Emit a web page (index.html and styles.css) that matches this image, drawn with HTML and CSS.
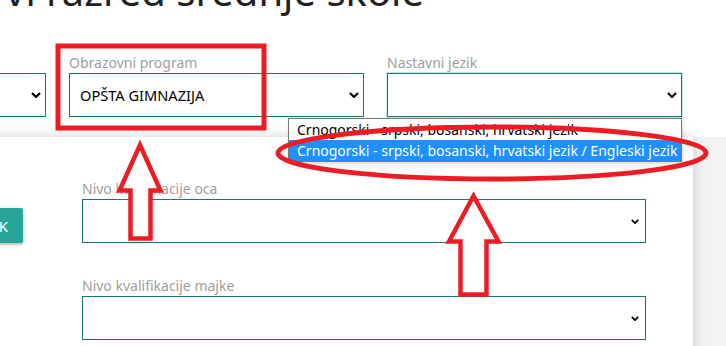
FILE: index.html
```html
<!DOCTYPE html>
<html lang="sr">
<head>
    <meta charset="UTF-8">
    <meta name="viewport" content="width=device-width, initial-scale=1.0">
    <title>Upis u prvi razred srednje škole</title>
    <link rel="stylesheet" href="styles.css">
</head>
<body>
    <div class="page">
        <h1 class="title"><span>Upis u prvi razred srednje škole</span></h1>

        <div class="top-form">
            <div class="field">
                <label>Razred</label>
                <div class="select">
                    <span></span>
                    <svg class="caret" viewBox="0 0 10 6"><polyline points="1,1 5,5 9,1"/></svg>
                </div>
            </div>
            <div class="field">
                <label>Obrazovni program</label>
                <div class="select">
                    <span>OPŠTA GIMNAZIJA</span>
                    <svg class="caret" viewBox="0 0 10 6"><polyline points="1,1 5,5 9,1"/></svg>
                </div>
            </div>
            <div class="field">
                <label>Nastavni jezik</label>
                <div class="select focused">
                    <span></span>
                    <svg class="caret" viewBox="0 0 10 6"><polyline points="1,1 5,5 9,1"/></svg>
                </div>
                <ul class="options">
                    <li>Crnogorski - srpski, bosanski, hrvatski jezik</li>
                    <li class="active">Crnogorski - srpski, bosanski, hrvatski jezik / Engleski jezik</li>
                </ul>
            </div>
        </div>

        <div class="lower">
            <div class="panel">
                <button class="btn">OK</button>
                <div class="fields">
                    <div class="field">
                        <label>Nivo kvalifikacije oca</label>
                        <div class="select">
                            <span></span>
                            <svg class="caret small" viewBox="0 0 10 6"><polyline points="1,1 5,5 9,1"/></svg>
                        </div>
                    </div>
                    <div class="field">
                        <label>Nivo kvalifikacije majke</label>
                        <div class="select">
                            <span></span>
                            <svg class="caret small" viewBox="0 0 10 6"><polyline points="1,1 5,5 9,1"/></svg>
                        </div>
                    </div>
                </div>
            </div>
        </div>

        <!-- red markup drawn over the screenshot -->
        <svg class="marks" viewBox="0 0 726 346">
            <rect x="58" y="46" width="206" height="82"/>
            <polygon points="140,145 160.5,190.5 150.5,190.5 150.5,238.5 130.5,238.5 130.5,190.5 119.5,190.5"/>
            <polygon points="473.5,196 498.5,241.5 486.5,241.5 486.5,294.5 460.5,294.5 460.5,241.5 449,241.5"/>
            <ellipse cx="492" cy="153" rx="214" ry="26"/>
        </svg>
    </div>
</body>
</html>
```

FILE: styles.css
```css
* {
    box-sizing: border-box;
}
html, body {
    margin: 0;
    background: #fff;
}
body {
    font-family: "Noto Sans", "Open Sans", sans-serif;
    color: #212121;
}
.page {
    position: relative;
    width: 726px;
    height: 346px;
    overflow: hidden;
}
.title {
    display: flex;
    justify-content: flex-end;
    width: 424px;
    margin: -33px 0 0;
    font-size: 40px;
    font-weight: 400;
    line-height: 48px;
    white-space: nowrap;
}
.top-form {
    display: grid;
    grid-template-columns: repeat(3, 295px);
    column-gap: 23px;
    margin: 38px 0 0 -249px;
}
.field {
    position: relative;
}
.field label {
    display: block;
    font-size: 14px;
    line-height: 20px;
    color: #9e9e9e;
}
.select {
    display: flex;
    align-items: center;
    justify-content: space-between;
    height: 44px;
    padding: 0 4px 0 10px;
    border: 1px solid #17796d;
    font-size: 14.6px;
    color: #000;
}
.select.focused {
    box-shadow: 0 0 0 1px rgba(38, 166, 154, 0.25);
}
.caret {
    width: 10px;
    height: 6px;
    fill: none;
    stroke: #000;
    stroke-width: 2.2;
}
.caret.small {
    width: 8px;
    height: 5px;
    margin-right: 2px;
}
.options {
    position: absolute;
    top: 65px;
    right: 0;
    width: 394px;
    margin: 0;
    padding: 0;
    list-style: none;
    background: #fff;
    border: 1px solid #787878;
    box-shadow: 1px 2px 4px rgba(0, 0, 0, 0.15);
    z-index: 3;
}
.options li {
    height: 21px;
    padding-left: 8px;
    font-size: 14px;
    line-height: 21px;
    color: #000;
    white-space: nowrap;
    overflow: hidden;
}
.options li.active {
    background: #1e90ff;
    color: #fff;
}
.lower {
    margin: 20px 0 0 -40px;
    padding-right: 33px;
    background: #f3f3f3;
    height: 300px;
}
.panel {
    display: flex;
    height: 100%;
    padding: 42px 0 0 7px;
    background: #fff;
    box-shadow: 0 0 12px rgba(0, 0, 0, 0.18);
}
.btn {
    width: 56px;
    height: 35px;
    margin-top: 29px;
    padding: 0 15px 0 0;
    text-align: right;
    border: none;
    border-radius: 2px;
    background: #26a69a;
    color: #fff;
    font-family: inherit;
    font-size: 15px;
    box-shadow: 0 2px 2px rgba(0, 0, 0, 0.14), 0 1px 5px rgba(0, 0, 0, 0.2);
}
.fields {
    display: flex;
    flex-direction: column;
    gap: 33px;
    width: 564px;
    margin-left: 59px;
}
.marks {
    position: absolute;
    top: 0;
    left: 0;
    width: 726px;
    height: 346px;
    z-index: 5;
}
.marks rect,
.marks polygon,
.marks ellipse {
    fill: none;
    stroke: #ed1c24;
    stroke-width: 5;
}
.marks polygon {
    fill: #fff;
    stroke-width: 4.5;
}
```
